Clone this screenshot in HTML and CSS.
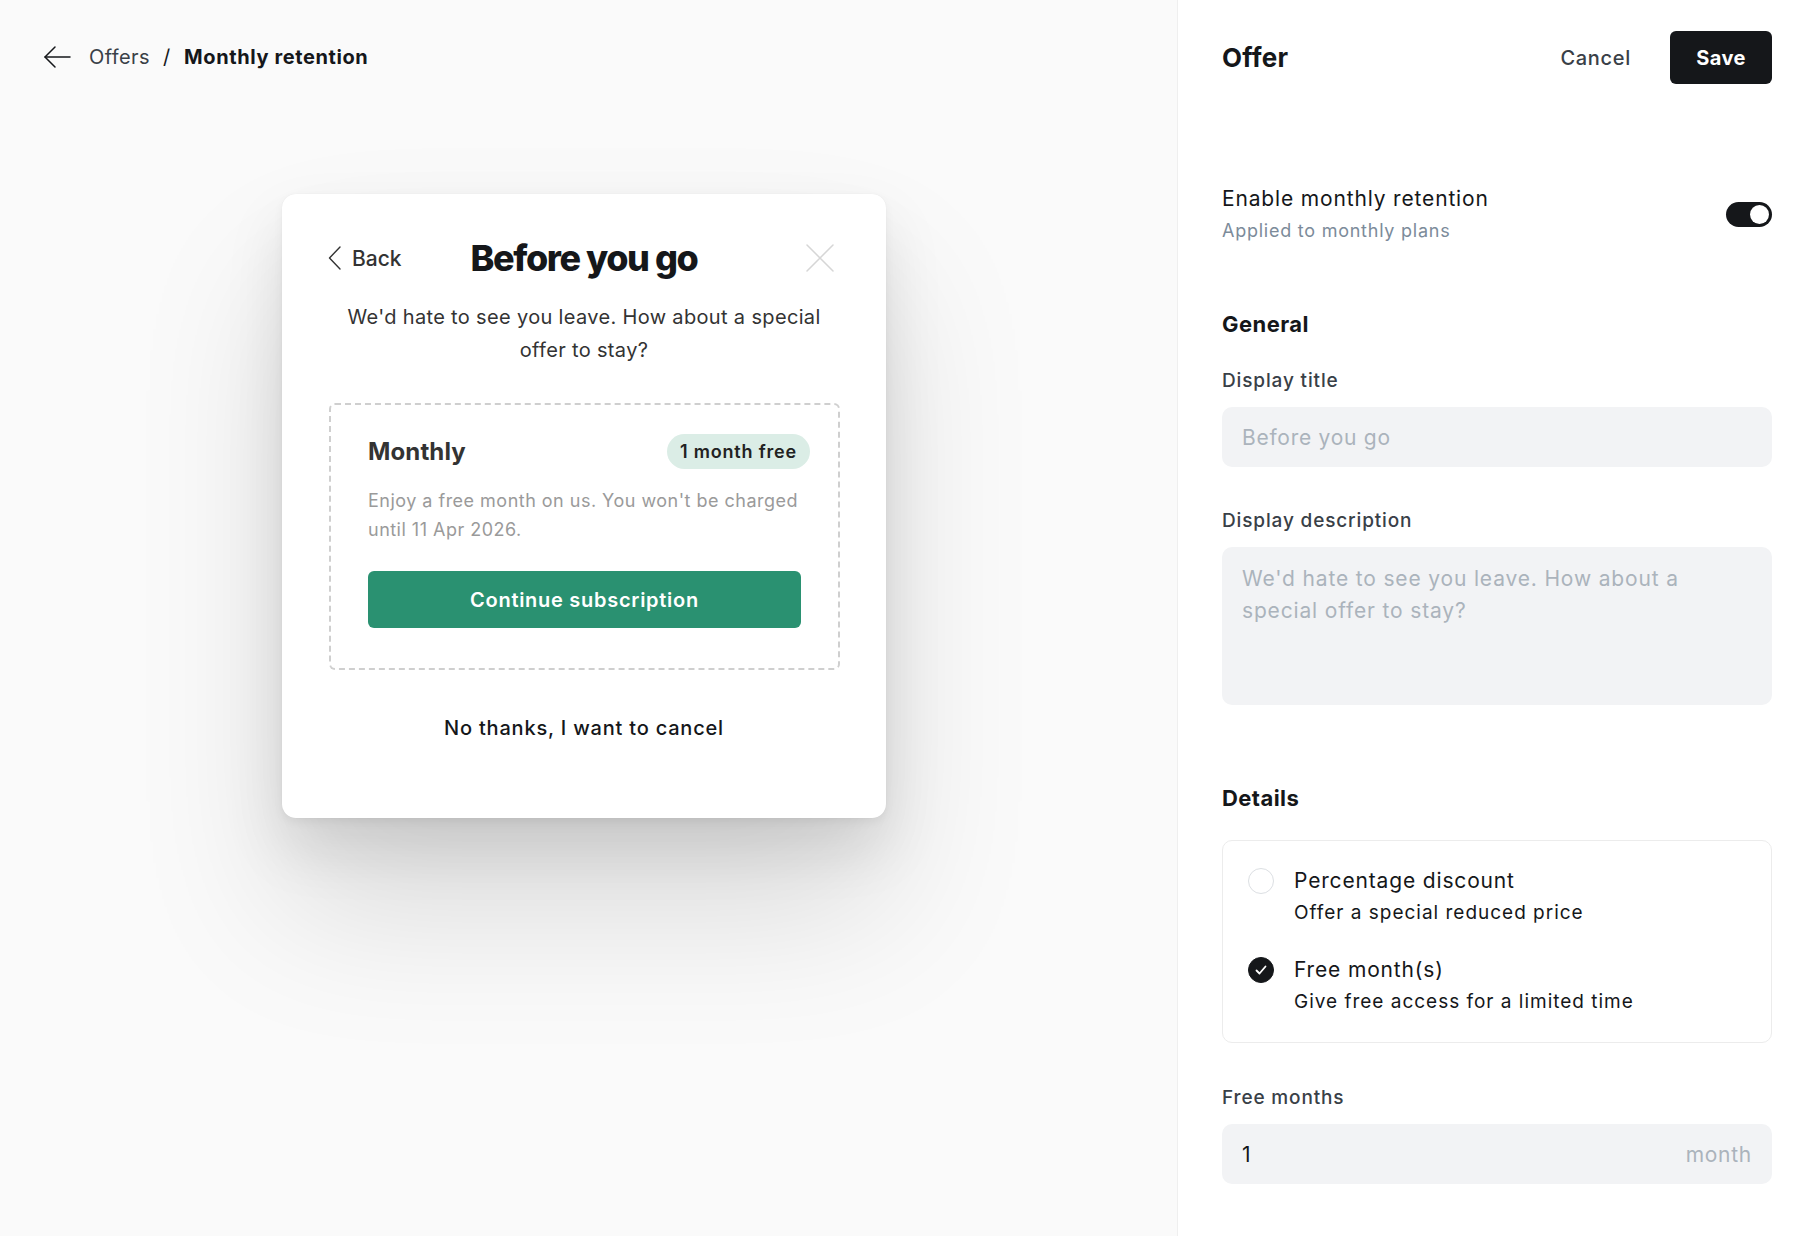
FILE: index.html
```html
<!DOCTYPE html>
<html lang="en">
<head>
<meta charset="utf-8">
<title>Monthly retention</title>
<link rel="stylesheet" href="styles.css">
</head>
<body>
<div class="app">
  <main class="preview">
    <nav class="crumbs">
      <svg class="crumb-back" width="28" height="24" viewBox="0 0 28 24" fill="none" stroke="#15171a" stroke-width="1.5" stroke-linecap="round" stroke-linejoin="round"><path d="M27 12H2"/><path d="M12 2L2 12l10 10"/></svg>
      <span class="crumb-link">Offers</span>
      <span class="crumb-sep">/</span>
      <span class="crumb-current">Monthly retention</span>
    </nav>

    <section class="modal">
      <header class="modal-head">
        <div class="back">
          <svg width="14" height="24" viewBox="0 0 14 24" fill="none" stroke="#333" stroke-width="1.4" stroke-linecap="round" stroke-linejoin="round"><path d="M12 1L1.5 12 12 23"/></svg>
          <span>Back</span>
        </div>
        <h1 class="modal-title">Before you go</h1>
        <div class="close">
          <svg width="28" height="28" viewBox="0 0 28 28" fill="none" stroke="#d6d6d6" stroke-width="1.5" stroke-linecap="round"><path d="M1 1l26 26M27 1L1 27"/></svg>
        </div>
      </header>
      <p class="modal-desc">We'd hate to see you leave. How about a special offer to stay?</p>

      <div class="offer-box">
        <div class="offer-head">
          <span class="offer-name">Monthly</span>
          <span class="badge">1 month free</span>
        </div>
        <p class="offer-text">Enjoy a free month on us. You won't be charged until 11 Apr 2026.</p>
        <button class="continue">Continue subscription</button>
      </div>

      <p class="no-thanks">No thanks, I want to cancel</p>
    </section>
  </main>

  <aside class="panel">
    <header class="panel-head">
      <h2 class="panel-title">Offer</h2>
      <div class="actions">
        <button class="btn-cancel">Cancel</button>
        <button class="btn-save">Save</button>
      </div>
    </header>

    <div class="enable-row">
      <div>
        <div class="enable-title">Enable monthly retention</div>
        <div class="enable-sub">Applied to monthly plans</div>
      </div>
      <span class="toggle"><span class="knob"></span></span>
    </div>

    <h3 class="section-title general">General</h3>
    <label class="field-label first">Display title</label>
    <div class="input"><span class="placeholder">Before you go</span></div>

    <label class="field-label">Display description</label>
    <div class="textarea"><span class="placeholder">We'd hate to see you leave. How about a special offer to stay?</span></div>

    <h3 class="section-title details">Details</h3>
    <div class="radio-card">
      <div class="radio-item">
        <span class="radio"></span>
        <div>
          <div class="radio-label">Percentage discount</div>
          <div class="radio-desc">Offer a special reduced price</div>
        </div>
      </div>
      <div class="radio-item">
        <span class="radio checked">
          <svg width="12" height="10" viewBox="0 0 12 10" fill="none" stroke="#fff" stroke-width="1.8" stroke-linecap="round" stroke-linejoin="round"><path d="M1.5 5.5l3 3 6-7"/></svg>
        </span>
        <div>
          <div class="radio-label">Free month(s)</div>
          <div class="radio-desc">Give free access for a limited time</div>
        </div>
      </div>
    </div>

    <label class="field-label months">Free months</label>
    <div class="input with-unit"><span class="value">1</span><span class="unit">month</span></div>
  </aside>
</div>
</body>
</html>
```

FILE: styles.css
```css
* { box-sizing: border-box; }
html, body { margin: 0; padding: 0; }
body {
  font-family: Inter, "Noto Sans", "Liberation Sans", sans-serif;
  color: #15171a;
  background: #fff;
  -webkit-font-smoothing: antialiased;
}
h1, h2, h3, p { margin: 0; }
button { font-family: inherit; border: 0; background: none; cursor: pointer; padding: 0; }

.app {
  display: grid;
  grid-template-columns: 1177px 1fr;
  height: 1236px;
  overflow: hidden;
}

/* ---------- preview side ---------- */
.preview {
  background: #fafafa;
  padding: 45px 0 0 43px;
}
.crumbs {
  display: flex;
  align-items: center;
  height: 24px;
  font-size: 20px;
  line-height: 24px;
}
.crumb-back { margin-right: 18px; }
.crumb-link { color: #394047; letter-spacing: 0.02em; }
.crumb-sep { color: #15171a; margin: 0 14px 0 13px; }
.crumb-current { font-weight: 700; color: #15171a; letter-spacing: 0.03em; }

.modal {
  width: 604px;
  height: 624px;
  margin: 125px 0 0 239px;
  background: #fff;
  border-radius: 14px;
  padding: 44px 46px 0 46px;
  box-shadow:
    0 0 1px rgba(0,0,0,0.08),
    0 4px 10px rgba(0,0,0,0.05),
    0 30px 60px rgba(0,0,0,0.10),
    0 90px 150px rgba(0,0,0,0.13);
}
.modal-head {
  display: grid;
  grid-template-columns: 1fr auto 1fr;
  align-items: center;
  height: 40px;
}
.back {
  display: flex;
  align-items: center;
  gap: 10px;
  font-size: 21px;
  font-weight: 500;
  color: #333;
}
.close { justify-self: end; display: flex; margin-right: 6px; }
.modal-title {
  font-size: 36px;
  font-weight: 800;
  letter-spacing: -0.04em;
  line-height: 40px;
  color: #15171a;
}
.modal-desc {
  margin: 23px 0 0;
  text-align: center;
  font-size: 20px;
  line-height: 33px;
  color: #333;
  letter-spacing: 0.017em;
}
.offer-box {
  margin: 36px 0 0 1px;
  width: 511px;
  height: 267px;
  border: 2px dashed #cfcfcf;
  border-radius: 6px;
  padding: 28px 37px 0 37px;
}
.offer-head {
  display: flex;
  justify-content: space-between;
  align-items: center;
  height: 35px;
  margin-top: 1px;
}
.offer-name {
  font-size: 24px;
  font-weight: 700;
  color: #333;
  letter-spacing: 0.005em;
}
.badge {
  margin-right: -9px;
  height: 35px;
  padding: 0 13px;
  border-radius: 18px;
  background: #dbede6;
  font-size: 18px;
  font-weight: 600;
  line-height: 35px;
  color: #222;
  letter-spacing: 0.045em;
}
.offer-text {
  margin-top: 17px;
  font-size: 18px;
  line-height: 29px;
  color: #9a9a9a;
  letter-spacing: 0.027em;
}
.continue {
  display: block;
  width: 100%;
  height: 57px;
  margin-top: 27px;
  border-radius: 6px;
  background: #2a9171;
  color: #fff;
  font-size: 20px;
  font-weight: 600;
  letter-spacing: 0.036em;
}
.no-thanks {
  margin-top: 43px;
  text-align: center;
  font-size: 20px;
  font-weight: 500;
  line-height: 30px;
  color: #15171a;
  letter-spacing: 0.04em;
}

/* ---------- settings panel ---------- */
.panel {
  background: #fff;
  border-left: 1px solid #efefef;
  padding: 31px 36px 0 44px;
  display: flex;
  flex-direction: column;
}
.panel-head {
  display: flex;
  justify-content: space-between;
  align-items: center;
  height: 53px;
}
.panel-title {
  font-size: 26px;
  font-weight: 700;
  letter-spacing: 0.01em;
}
.actions { display: flex; align-items: center; }
.btn-cancel {
  font-size: 20px;
  font-weight: 500;
  color: #394047;
  margin-right: 39px;
  letter-spacing: 0.035em;
}
.btn-save {
  width: 102px;
  height: 53px;
  border-radius: 6px;
  background: #15171a;
  color: #fff;
  font-size: 20px;
  font-weight: 700;
  letter-spacing: 0.02em;
}
.enable-row {
  display: flex;
  justify-content: space-between;
  align-items: center;
  margin-top: 101px;
}
.enable-title { font-size: 21px; line-height: 28px; color: #15171a; letter-spacing: 0.04em; }
.enable-sub { margin-top: 5px; font-size: 18px; line-height: 26px; color: #7c8b9a; letter-spacing: 0.042em; }
.toggle {
  width: 46px;
  height: 25px;
  border-radius: 13px;
  background: #15171a;
  padding: 3px;
  display: flex;
  justify-content: flex-end;
  margin-top: -1px;
}
.knob { width: 19px; height: 19px; border-radius: 50%; background: #fff; }

.section-title { font-size: 22px; font-weight: 700; line-height: 30px; letter-spacing: 0.02em; }
.general { margin-top: 65px; }
.details { margin-top: 78px; }
.field-label {
  display: block;
  margin-top: 40px;
  font-size: 19px;
  font-weight: 500;
  line-height: 28px;
  color: #394047;
  letter-spacing: 0.045em;
}
.field-label.first { margin-top: 28px; }
.field-label.months { margin-top: 41px; }

.input, .textarea {
  margin-top: 12px;
  background: #f2f3f5;
  border-radius: 10px;
  padding: 0 20px;
  font-size: 21px;
  letter-spacing: 0.035em;
}
.input { height: 60px; display: flex; align-items: center; }
.textarea { height: 158px; padding-top: 16px; line-height: 32px; padding-right: 60px; letter-spacing: 0.04em; }
.placeholder { color: #abb3bc; }
.with-unit { justify-content: space-between; }
.value { color: #15171a; }
.unit { color: #abb3bc; }

.radio-card {
  margin-top: 27px;
  border: 1px solid #ececec;
  border-radius: 10px;
  padding: 25px 25px 25px 25px;
  display: flex;
  flex-direction: column;
  gap: 27px;
}
.radio-item { display: flex; align-items: flex-start; gap: 20px; }
.radio {
  width: 26px;
  height: 26px;
  border-radius: 50%;
  border: 1px solid #dcdfe3;
  margin-top: 2px;
  flex: none;
  display: flex;
  align-items: center;
  justify-content: center;
}
.radio.checked { background: #15171a; border-color: #15171a; }
.radio-label { font-size: 21px; line-height: 30px; color: #15171a; letter-spacing: 0.04em; }
.radio-desc { margin-top: 2px; font-size: 19px; line-height: 30px; color: #15171a; letter-spacing: 0.052em; }
```
